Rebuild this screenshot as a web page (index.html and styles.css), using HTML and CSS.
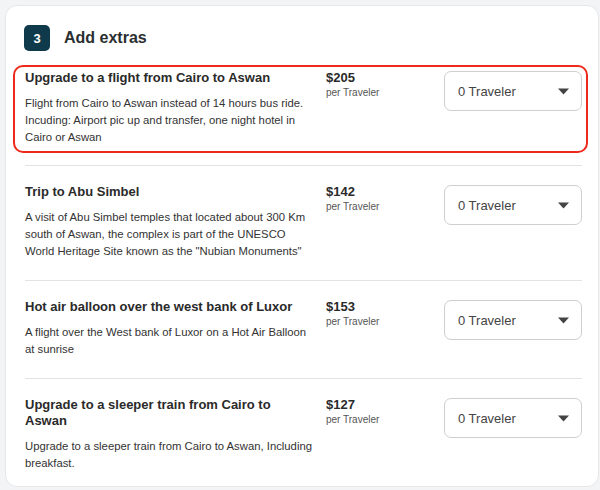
FILE: index.html
```html
<!DOCTYPE html>
<html lang="en">
<head>
    <meta charset="UTF-8">
    <meta name="viewport" content="width=device-width, initial-scale=1.0">
    <title>Add extras</title>
    <link rel="stylesheet" href="styles.css">
</head>
<body>
    <div class="card">
        <div class="step-head">
            <span class="step-num">3</span>
            <h2>Add extras</h2>
        </div>

        <div class="extra first">
            <div class="extra-row highlight">
                <div class="info">
                    <h3>Upgrade to a flight from Cairo to Aswan</h3>
                    <p>Flight from Cairo to Aswan instead of 14 hours bus ride. Incuding: Airport pic up and transfer, one night hotel in Cairo or Aswan</p>
                </div>
                <div class="price">
                    <strong>$205</strong>
                    <span>per Traveler</span>
                </div>
                <div class="select">
                    <span>0 Traveler</span>
                    <svg width="11" height="7" viewBox="0 0 11 7"><path d="M0 0.5h11L5.5 6.5z" fill="#444"/></svg>
                </div>
            </div>
        </div>

        <div class="extra">
            <div class="extra-row">
                <div class="info">
                    <h3>Trip to Abu Simbel</h3>
                    <p>A visit of Abu Simbel temples that located about 300 Km south of Aswan, the complex is part of the UNESCO World Heritage Site known as the "Nubian Monuments"</p>
                </div>
                <div class="price">
                    <strong>$142</strong>
                    <span>per Traveler</span>
                </div>
                <div class="select">
                    <span>0 Traveler</span>
                    <svg width="11" height="7" viewBox="0 0 11 7"><path d="M0 0.5h11L5.5 6.5z" fill="#444"/></svg>
                </div>
            </div>
        </div>

        <div class="extra">
            <div class="extra-row">
                <div class="info">
                    <h3>Hot air balloon over the west bank of Luxor</h3>
                    <p>A flight over the West bank of Luxor on a Hot Air Balloon at sunrise</p>
                </div>
                <div class="price">
                    <strong>$153</strong>
                    <span>per Traveler</span>
                </div>
                <div class="select">
                    <span>0 Traveler</span>
                    <svg width="11" height="7" viewBox="0 0 11 7"><path d="M0 0.5h11L5.5 6.5z" fill="#444"/></svg>
                </div>
            </div>
        </div>

        <div class="extra last">
            <div class="extra-row">
                <div class="info">
                    <h3>Upgrade to a sleeper train from Cairo to Aswan</h3>
                    <p>Upgrade to a sleeper train from Cairo to Aswan, Including breakfast.</p>
                </div>
                <div class="price">
                    <strong>$127</strong>
                    <span>per Traveler</span>
                </div>
                <div class="select">
                    <span>0 Traveler</span>
                    <svg width="11" height="7" viewBox="0 0 11 7"><path d="M0 0.5h11L5.5 6.5z" fill="#444"/></svg>
                </div>
            </div>
        </div>
    </div>
</body>
</html>
```

FILE: styles.css
```css
body {
    margin: 0;
    padding: 5px 1px 0 5px;
    background-color: #f3f4f6;
    color: #333;
    font-family: "Liberation Sans", Arial, sans-serif;
}
.card {
    background-color: white;
    border: 1px solid #e6e7e9;
    border-radius: 12px;
    padding: 19px 16px 0 19px;
}
.step-head {
    display: flex;
    align-items: center;
    gap: 14px;
    margin-left: -1px;
}
.step-num {
    width: 26px;
    height: 26px;
    border-radius: 5px;
    background-color: #0e3a4c;
    color: white;
    font-size: 13px;
    font-weight: bold;
    display: flex;
    align-items: center;
    justify-content: center;
}
.step-head h2 {
    margin: 0;
    font-size: 16px;
    color: #2b2f31;
}
.extra {
    border-bottom: 1px solid #e2e3e5;
    padding: 18px 0 20px;
}
.extra.first {
    padding: 14px 0 12px;
}
.extra.last {
    border-bottom: none;
    padding-bottom: 14px;
}
.extra-row {
    display: grid;
    grid-template-columns: 288px 1fr 138px;
    column-gap: 13px;
    align-items: start;
}
.highlight {
    margin: 0 -6px 0 -12px;
    padding: 3px 4px 5px 10px;
    border: 2px solid #ee2a1c;
    border-radius: 10px;
}
.info h3 {
    margin: 0;
    max-width: 280px;
    font-size: 13px;
    line-height: 16px;
    color: #2a2a2a;
}
.info p {
    margin: 9px 0 0;
    font-size: 11.3px;
    line-height: 17px;
    color: #333;
}
.price strong {
    display: block;
    font-size: 13px;
    line-height: 16px;
    color: #2a2a2a;
}
.price span {
    display: block;
    font-size: 10px;
    line-height: 13px;
    color: #555;
}
.select {
    height: 38px;
    margin-top: 1px;
    border: 1px solid #cfcfcf;
    border-radius: 7px;
    display: flex;
    align-items: center;
    justify-content: space-between;
    padding: 0 12px 0 13px;
    font-size: 13px;
    color: #444;
}
```
